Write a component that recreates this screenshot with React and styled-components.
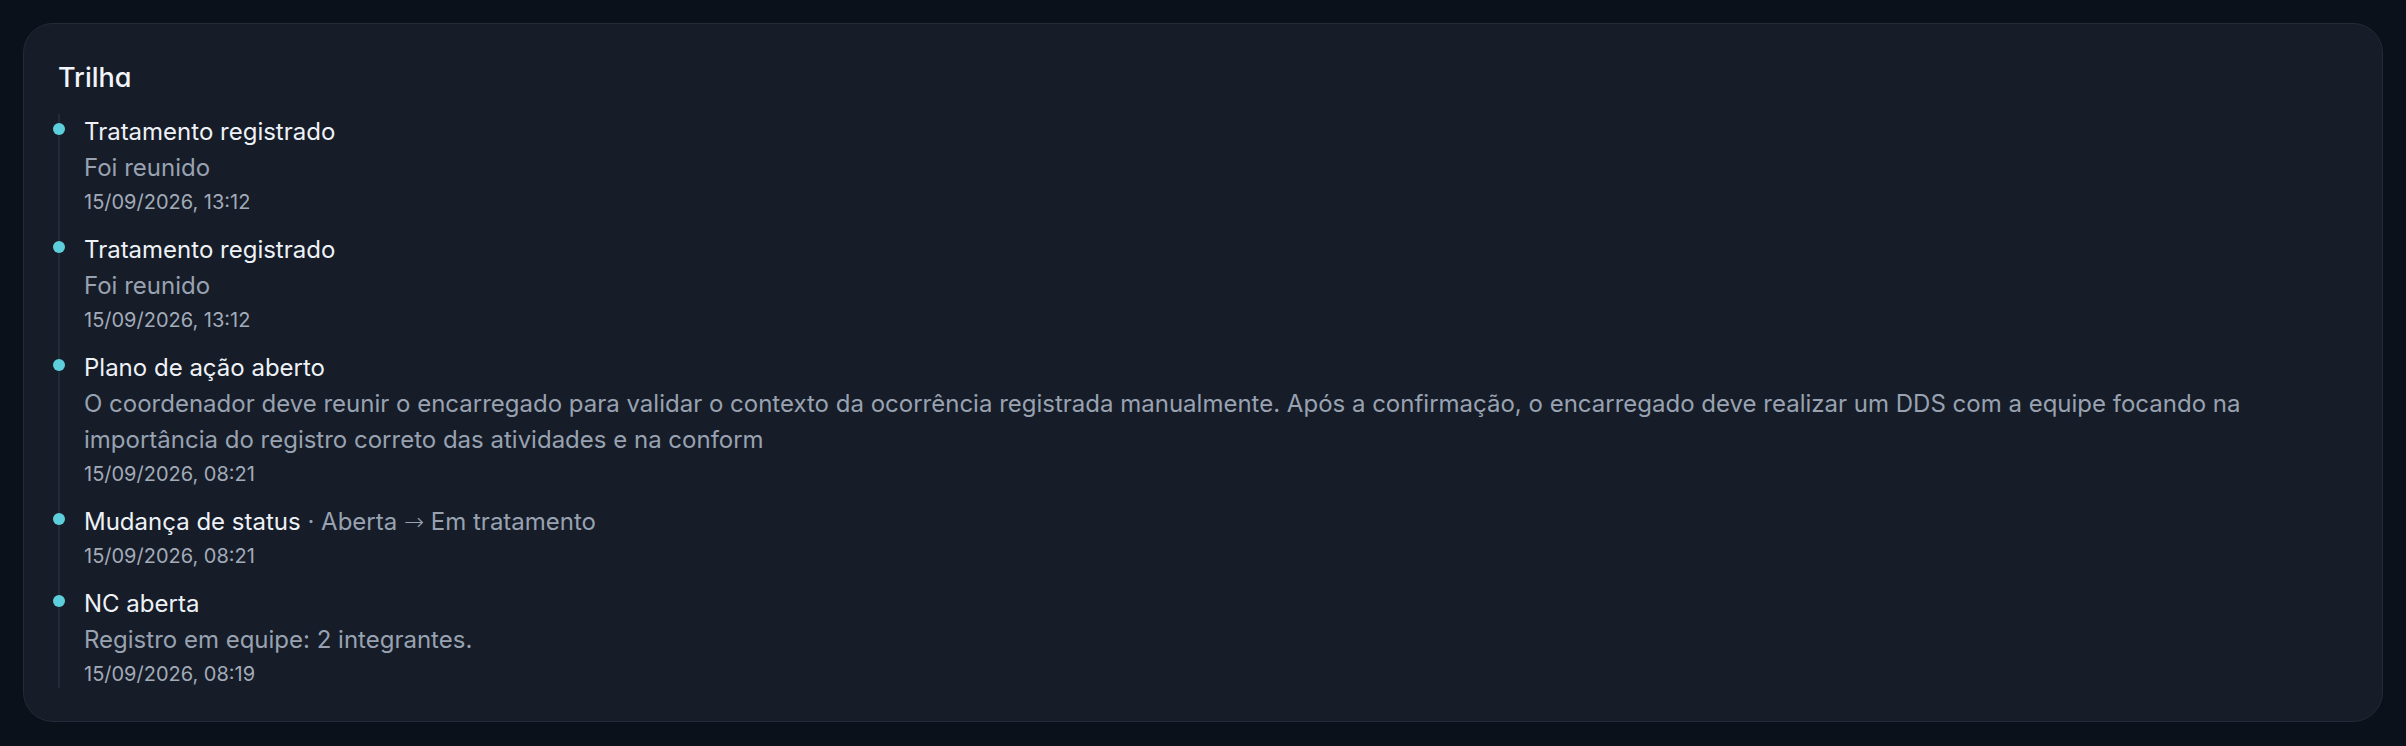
import styled, { createGlobalStyle } from 'styled-components';

const GlobalStyle = createGlobalStyle`
  html, body {
    margin: 0;
    padding: 0;
    background: #0b111b;
  }
  body {
    font-family: Inter, "Noto Sans", sans-serif;
    -webkit-font-smoothing: antialiased;
  }
`;

const Page = styled.div`
  padding: 23px;
  min-height: 746px;
  box-sizing: border-box;
`;

const Card = styled.section`
  background: #161c28;
  border: 1px solid #232b38;
  border-radius: 30px;
  padding: 36px 34px 33px;
`;

const Heading = styled.h2`
  margin: 0 0 18px;
  font-size: 27px;
  line-height: 36px;
  font-weight: 500;
  color: #f1f5f9;
  font-feature-settings: 'cv11';
`;

const List = styled.ol`
  list-style: none;
  margin: 0;
  padding: 0;
  border-left: 2px solid #232b38;
  display: flex;
  flex-direction: column;
  gap: 16px;
`;

const Item = styled.li`
  position: relative;
  padding-left: 24px;
`;

const Dot = styled.span`
  position: absolute;
  left: -7px;
  top: 9px;
  width: 12px;
  height: 12px;
  border-radius: 50%;
  background: #5dcfdc;
`;

const Title = styled.div`
  font-size: 24px;
  line-height: 36px;
  color: #eef2f7;
`;

const Note = styled.span`
  color: #98a2b1;
`;

const Arrow = styled.span`
  font-family: "DejaVu Sans", sans-serif;
  font-weight: 300;
`;

const Body = styled.div`
  font-size: 24px;
  line-height: 36px;
  color: #98a2b1;
`;

const When = styled.div`
  margin-top: 2px;
  font-size: 20px;
  line-height: 28px;
  color: #a2abb8;
`;

const events = [
  { title: 'Tratamento registrado', body: 'Foi reunido', when: '15/09/2026, 13:12' },
  { title: 'Tratamento registrado', body: 'Foi reunido', when: '15/09/2026, 13:12' },
  {
    title: 'Plano de ação aberto',
    body:
      'O coordenador deve reunir o encarregado para validar o contexto da ocorrência registrada manualmente. Após a confirmação, o encarregado deve realizar um DDS com a equipe focando na importância do registro correto das atividades e na conform',
    when: '15/09/2026, 08:21',
  },
  { title: 'Mudança de status', from: 'Aberta', to: 'Em tratamento', when: '15/09/2026, 08:21' },
  { title: 'NC aberta', body: 'Registro em equipe: 2 integrantes.', when: '15/09/2026, 08:19' },
];

export default function App() {
  return (
    <Page>
      <GlobalStyle />
      <Card>
        <Heading>Trilha</Heading>
        <List>
          {events.map((ev, i) => (
            <Item key={`ev-${i}`}>
              <Dot />
              <Title>
                {ev.title}
                {ev.from && (
                  <Note>
                    {' · '}
                    {ev.from} <Arrow>→</Arrow> {ev.to}
                  </Note>
                )}
              </Title>
              {ev.body && <Body>{ev.body}</Body>}
              <When>{ev.when}</When>
            </Item>
          ))}
        </List>
      </Card>
    </Page>
  );
}
